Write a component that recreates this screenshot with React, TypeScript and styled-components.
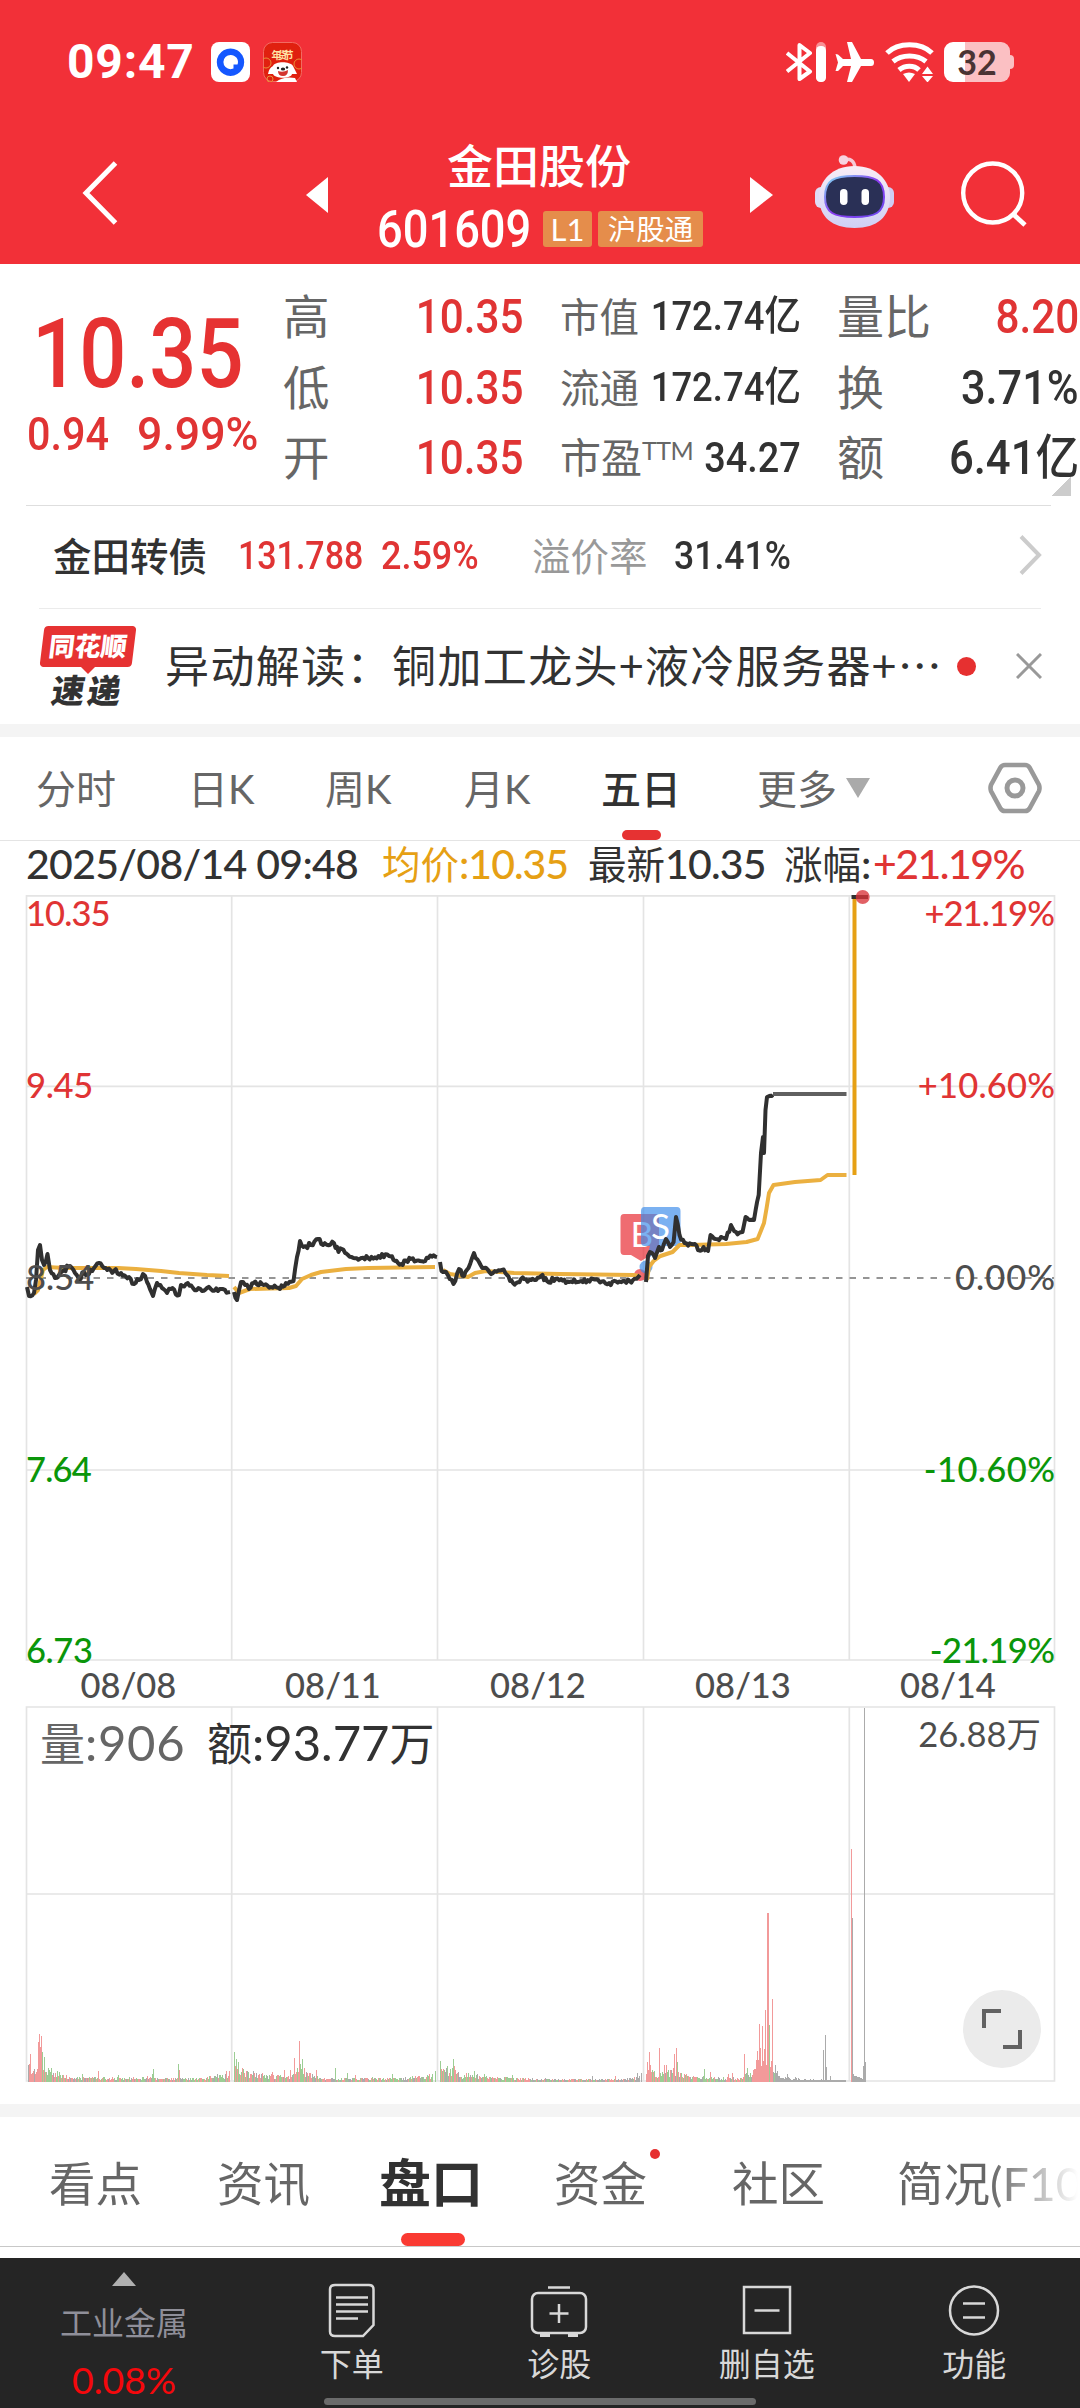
import React from "react";
import styled, { createGlobalStyle, css } from "styled-components";

const CJK = `Lato, "Noto Sans CJK SC", sans-serif`;
const DIN = `Roboto, "Noto Sans CJK SC", sans-serif`;
const RED = "#e03434";
const INK = "#323232";
const GREY = "#666666";

const Global = createGlobalStyle`
  * { box-sizing: border-box; }
  body { margin: 0; background: #fff; }
`;

const Screen = styled.main`
  width: 1080px;
  height: 2408px;
  display: flex;
  flex-direction: column;
  overflow: hidden;
  background: #fff;
  color: ${INK};
  font-family: ${CJK};
  white-space: nowrap;
`;

/* condensed numerals */
const Num = styled.span<{ $size: number; $color?: string; $k?: number; $origin?: string; $weight?: number }>`
  display: block;
  font-family: ${DIN};
  font-size: ${(p) => p.$size}px;
  font-weight: ${(p) => p.$weight ?? 500};
  color: ${(p) => p.$color ?? INK};
  transform: scaleX(${(p) => p.$k ?? 0.88});
  transform-origin: ${(p) => p.$origin ?? "left"} center;
`;

/* ---------- header ---------- */
const Header = styled.header`
  flex: none;
  height: 264px;
  background: #f23038;
  color: #fff;
`;
const StatusBar = styled.div`
  height: 124px;
  padding: 0 66px 0 67px;
  display: flex;
  align-items: center;
  justify-content: space-between;
`;
const StatusGroup = styled.div`
  display: flex;
  align-items: center;
`;
const Clock = styled.span`
  width: 144px;
  font: 700 48px/60px ${DIN};
  letter-spacing: 0.8px;
`;
const AppIcon = styled.svg`
  width: 39px;
  height: 40px;
  margin-right: 13px;
`;
const Battery = styled.div`
  width: 66px;
  height: 40px;
  margin-right: 4px;
  border-radius: 9px;
  background: linear-gradient(90deg, #fff 21px, #fbc0c3 21px);
  color: #4a3333;
  font: 700 34px/40px Lato, sans-serif;
  text-align: center;
`;
const StatusIcons = styled.svg`
  width: 158px;
  height: 40px;
`;
const BatteryTip = styled.i`
  width: 4px;
  height: 14px;
  margin-left: -4px;
  border-radius: 0 4px 4px 0;
  background: #fbc0c3;
`;
const TitleBar = styled.div`
  height: 140px;
  display: flex;
  align-items: flex-start;
`;
const BarIcon = styled.svg<{ $w: number; $h: number; $ml: number; $mt: number }>`
  flex: none;
  width: ${(p) => p.$w}px;
  height: ${(p) => p.$h}px;
  margin: ${(p) => p.$mt}px 0 0 ${(p) => p.$ml}px;
`;
const TitleBlock = styled.div`
  width: 422px;
  padding-top: 12px;
  display: flex;
  flex-direction: column;
  align-items: center;
`;
const StockName = styled.h1`
  margin: 0;
  font: 500 46px/60px ${CJK};
`;
const CodeRow = styled.div`
  width: 100%;
  height: 60px;
  margin-top: 3px;
  padding: 0 47px 0 49px;
  display: flex;
  align-items: center;
`;
const CodeCell = styled.div`
  width: 166px;
`;
const Tag = styled.span<{ $w: number }>`
  width: ${(p) => p.$w}px;
  height: 36px;
  margin-right: 6px;
  border-radius: 3px;
  background: #e58d4b;
  font: 400 28.5px/36px ${CJK};
  text-align: center;
  flex: none;
`;
const LevelTag = styled(Tag)`
  font-size: 31px;
`;

/* ---------- quote ---------- */
const Quote = styled.section`
  flex: none;
  height: 241px;
  padding-top: 17px;
  display: flex;
`;
const PriceCol = styled.div`
  width: 283px;
  flex: none;
`;
const BigPrice = styled.div`
  height: 138px;
  padding: 12px 0 0 32px;
  line-height: 122px;
`;
const ChangeRow = styled.div`
  display: flex;
  padding-left: 27px;
  line-height: 30px;
`;
const ChangeCell = styled.div`
  width: 110px;
`;
const StatCol = styled.div<{ $w: number; $gap?: number }>`
  width: ${(p) => p.$w}px;
  margin-right: ${(p) => p.$gap ?? 0}px;
  flex: none;
`;
const StatRow = styled.div`
  height: 70.5px;
  line-height: 71.5px;
  display: flex;
  justify-content: space-between;
`;
const StatLabel = styled.span<{ $size: number }>`
  display: block;
  width: 0;
  font-size: ${(p) => p.$size}px;
  color: ${GREY};
`;
const Ttm = styled.sup`
  font-size: 25px;
  line-height: 0;
  vertical-align: 13px;
  letter-spacing: -0.5px;
`;
const Divider = styled.div<{ $l: number; $r: number; $c: string }>`
  flex: none;
  height: 1px;
  margin: 0 ${(p) => p.$r}px 0 ${(p) => p.$l}px;
  background: ${(p) => p.$c};
`;
const CornerMark = styled.i`
  position: absolute;
  left: 1051px;
  top: 476px;
  width: 20px;
  height: 20px;
  background: linear-gradient(135deg, transparent 50%, #ccc 50%);
`;

/* ---------- bond + news ---------- */
const BondRow = styled.section`
  flex: none;
  height: 102px;
  padding: 0 38px 2px 53px;
  display: flex;
  align-items: center;
  font-size: 38.5px;
  line-height: 60px;
`;
const Cell = styled.div<{ $w: number; $color?: string; $weight?: number }>`
  flex: none;
  width: ${(p) => p.$w}px;
  color: ${(p) => p.$color ?? INK};
  font-weight: ${(p) => p.$weight ?? 400};
`;
const Spacer = styled.div`
  flex: 1;
`;
const NewsRow = styled.section`
  flex: none;
  height: 115px;
  padding: 17px 38px 0 40px;
  display: flex;
`;
const Badge = styled.div`
  width: 125px;
  flex: none;
`;
const BadgeTop = styled.div`
  width: 92px;
  height: 41px;
  margin-left: 2px;
  border-radius: 4px;
  background: #e63232;
  color: #fff;
  transform: skewX(-7deg);
  font: 900 26px/40px ${CJK};
  text-align: center;
`;
const BadgeTail = styled.i`
  display: block;
  width: 0;
  margin-left: 41px;
  border: 7px solid transparent;
  border-top-color: #e63232;
  border-bottom: 0;
`;
const BadgeBottom = styled.div`
  width: 86px;
  margin: -1px 0 0 5px;
  color: ${INK};
  transform: skewX(-9deg);
  font: 900 33px/34px ${CJK};
  letter-spacing: 3px;
  text-align: center;
`;
const Headline = styled.div`
  width: 792px;
  font-size: 44px;
  line-height: 80px;
  letter-spacing: 1.4px;
  font-family: "Noto Sans CJK SC", sans-serif;
  margin-top: -2px;
`;
const Dot = styled.i<{ $d: number }>`
  display: block;
  width: ${(p) => p.$d}px;
  height: ${(p) => p.$d}px;
  border-radius: 50%;
  background: #e63030;
`;
const NewsDot = styled(Dot)`
  margin-top: 31px;
`;
const Band = styled.div`
  flex: none;
  height: 13px;
  background: #f4f4f4;
`;

/* ---------- period tabs ---------- */
const PeriodTabs = styled.nav`
  flex: none;
  height: 103px;
  padding: 0 38px 0 36px;
  display: flex;
  font-size: 40px;
  line-height: 105px;
`;
const PeriodTab = styled.div<{ $w: number; $on?: boolean }>`
  position: relative;
  flex: none;
  width: ${(p) => p.$w}px;
  color: ${(p) => (p.$on ? INK : GREY)};
  ${(p) =>
    p.$on &&
    css`
      font-weight: 500;
      &::after {
        content: "";
        position: absolute;
        left: 21px;
        bottom: 0;
        width: 39px;
        height: 10px;
        border-radius: 5px;
        background: #e63232;
      }
    `}
`;
const MoreArrow = styled.i`
  margin: 41px 0 0 9px;
  width: 0;
  height: 0;
  border: 12.5px solid transparent;
  border-top: 20px solid #aaa;
  border-bottom: 0;
`;
const InfoRow = styled.div`
  flex: none;
  height: 54px;
  padding: 0 0 0 26px;
  display: flex;
  font-size: 38.5px;
  line-height: 46px;
`;
const Latin = styled.span<{ $ls?: number }>`
  font-size: 41px;
  font-weight: 500;
  letter-spacing: ${(p) => p.$ls ?? -0.7}px;
`;

/* ---------- chart ---------- */
const Chart = styled.svg`
  flex: none;
  display: block;
  width: 1080px;
  height: 1209px;
  overflow: visible;
  font-family: ${CJK};
`;

/* ---------- content tabs ---------- */
const ContentTabs = styled.nav`
  flex: none;
  height: 129px;
  padding-left: 49px;
  display: flex;
  overflow: hidden;
  mask-image: linear-gradient(90deg, #000 990px, transparent 1078px);
`;
const ContentTab = styled.div<{ $w: number; $on?: boolean }>`
  position: relative;
  flex: none;
  width: ${(p) => p.$w}px;
  font-size: ${(p) => (p.$on ? 52 : 46.5)}px;
  font-weight: ${(p) => (p.$on ? 700 : 400)};
  color: ${(p) => (p.$on ? INK : GREY)};
  line-height: 132px;
  ${(p) =>
    p.$on &&
    css`
      &::after {
        content: "";
        position: absolute;
        left: 22px;
        bottom: 0;
        width: 64px;
        height: 13px;
        border-radius: 6.5px;
        background: #fa3a32;
      }
    `}
`;
const TabDot = styled(Dot)`
  position: absolute;
  left: 96px;
  top: 32px;
`;

/* ---------- bottom bar ---------- */
const BottomBar = styled.footer`
  position: relative;
  flex: none;
  height: 150px;
  margin-top: 11px;
  background: #252525;
  display: flex;
  color: #d8d8d8;
`;
const Sector = styled.div`
  width: 248px;
  padding-top: 14px;
  display: flex;
  flex-direction: column;
  align-items: center;
  color: #8f8f99;
  font-size: 32px;
  line-height: 46px;
`;
const UpArrow = styled.i`
  width: 0;
  height: 0;
  border: 12.5px solid transparent;
  border-top: 0;
  border-bottom: 14px solid #b0b0b0;
`;
const SectorName = styled.span`
  margin-top: 14px;
`;
const SectorPct = styled.span`
  margin-top: 11px;
  color: #f5080c;
  font-size: 37.5px;
`;
const Action = styled.div`
  width: 207.5px;
  padding-top: 24px;
  display: flex;
  flex-direction: column;
  align-items: center;
  font-size: 32px;
  line-height: 47px;
`;
const ActionIcon = styled.svg`
  width: 58px;
  height: 58px;
  fill: none;
  stroke: #d8d8d8;
  stroke-width: 2.5;
`;
const HomeBar = styled.i`
  position: absolute;
  left: 324px;
  bottom: 3px;
  width: 432px;
  height: 7px;
  border-radius: 4px;
  background: #6b6b6b;
`;

/* ---------- chart data ---------- */
type Pt = [number, number];

const priceDays: Pt[][] = [
  [[27,1287],[29,1296],[34,1293],[36,1280],[38,1250],[40,1245],[42,1260],[44,1265],[47.5,1254],[50,1270],[55,1278],[59,1275],[64,1270],[70,1266],[75,1273],[79,1279],[84,1272],[89,1274],[94,1268],[99,1263],[104,1268],[114,1271],[121,1273],[129,1277],[134,1284],[139,1280],[143,1274],[147,1282],[153,1296],[157,1283],[162,1288],[167,1293],[171,1289],[179,1295],[181,1285],[186,1284],[193,1288],[202,1291],[207,1288],[218,1291],[230,1292]],
  [[234,1292],[237,1300],[241,1282],[245,1285],[249,1289],[253.5,1283],[264,1285],[271,1287],[280,1289],[286,1283],[293.5,1281],[297,1257],[300,1241],[303.5,1247],[311,1245],[318,1239],[323,1245],[334,1243],[338.5,1252],[342,1249],[348,1255],[353.5,1258],[368,1258],[378.5,1256],[389,1256],[395,1261],[401,1264],[411,1259],[420,1261],[428.5,1258],[437,1257]],
  [[440,1262],[441.5,1271],[446,1272],[453.5,1284],[459,1269],[464,1276],[468.5,1268],[474,1253],[479,1262],[484,1268],[493,1273],[502,1270],[507,1275],[513,1283],[521,1279],[536,1280],[541,1276],[547,1281],[561,1279],[569,1282],[581,1281],[593,1279],[609,1283],[623,1281],[633,1280],[640,1275]],
  [[646,1282],[648,1256],[652,1253],[655,1258],[659,1247],[662,1250],[666,1239],[670,1247],[673.6,1242],[676,1217],[679.5,1235],[684.6,1243],[695,1244],[698,1250],[703.6,1247],[708,1251],[710.5,1235],[715.6,1239],[721,1237],[726,1239],[731,1225],[736,1232],[742.5,1232],[745.6,1217],[750,1220],[754,1220],[758.7,1195],[761,1153],[763,1137],[764,1153],[765.5,1110],[767,1097],[773,1095]],
];

const averageDays: Pt[][] = [
  [[34,1294],[38,1290],[43,1270],[47,1267],[64,1268],[118,1268],[136,1269],[161,1271],[179,1273],[207,1275],[229,1276]],
  [[234,1287],[239,1293],[250,1289],[289,1288],[296,1286],[302,1279],[311,1275],[321,1272],[346,1269],[368,1268],[435,1267]],
  [[443,1270],[450,1274],[468,1277],[475,1273],[486,1271],[514,1273],[560,1274],[633,1275],[640,1276]],
  [[647,1280],[649,1267],[653.6,1261],[660.5,1256],[672.6,1252],[679.5,1245],[691,1245],[726,1244],[746.6,1242],[757.6,1239],[764,1223],[766.6,1208],[769,1193],[773.5,1185],[795,1182],[820.6,1180],[827.5,1175],[846.5,1175]],
  [[854.5,1175],[854.5,897]],
];

const noise = (i: number) => {
  const v = Math.sin(i * 127.1 + 11.7) * 43758.5453;
  return v - Math.floor(v);
};

/* minute-by-minute ripple added between turning points */
const ripple = (pts: Pt[]): string => {
  const out: string[] = [];
  for (let i = 0; i < pts.length - 1; i++) {
    const [x0, y0] = pts[i];
    const [x1, y1] = pts[i + 1];
    const n = Math.max(1, Math.round((x1 - x0) / 1.7));
    for (let k = 0; k < n; k++) {
      const t = k / n;
      const amp = k === 0 ? 0 : 5;
      out.push(`${(x0 + (x1 - x0) * t).toFixed(1)},${(y0 + (y1 - y0) * t + (noise(x0 * 3 + k) - 0.5) * amp).toFixed(1)}`);
    }
  }
  out.push(pts[pts.length - 1].join(","));
  return out.join(" ");
};

const TINT = { r: "#f29a9a", g: "#9ccd94", n: "#ababab" };
type Tint = keyof typeof TINT;

/* baseline volume per session: [x, typical height] */
const volumeFloor: Pt[][] = [
  [[28,14],[32,9],[37,14],[44,20],[48,9],[60,8],[72,4],[110,3],[150,4],[158,3],[200,3],[215,5],[229,6]],
  [[234,22],[239,13],[250,8],[270,6],[292,5],[296,14],[302,15],[306,8],[320,3],[360,3],[400,3],[432,6]],
  [[440,15],[447,11],[455,10],[460,6],[475,7],[482,4],[520,3],[560,2],[620,2],[640,4]],
  [[646,16],[650,16],[654,8],[668,9],[674,12],[680,9],[688,5],[720,3],[742,4],[746,7],[752,6],[756,18],[760,30],[766,30],[771,26],[775,14],[778,5],[800,2],[846,1]],
  [[853,8],[858,4],[866,4]],
];
const volumeSpikes: [number, number, Tint][] = [
  [30,28,"r"],[38,40,"r"],[39,48,"r"],[40,35,"r"],[41,46,"r"],[42,30,"g"],[44,25,"g"],[48,14,"g"],[51,14,"g"],[98,11,"r"],[82,8,"g"],[118,7,"g"],[152,8,"g"],[153,13,"g"],[178,18,"g"],[179,12,"r"],[217,8,"n"],[226,11,"r"],[229,11,"r"],
  [234,30,"g"],[236,18,"g"],[262,9,"r"],[272,10,"r"],[284,12,"r"],[290,12,"r"],[294,24,"r"],[299,41,"r"],[302,23,"g"],[316,12,"r"],[335,14,"g"],[347,9,"g"],[355,7,"r"],[392,8,"g"],[419,6,"r"],[432,8,"g"],[435,11,"g"],
  [440,21,"g"],[447,16,"g"],[453,23,"g"],[454,16,"r"],[466,9,"r"],[474,11,"g"],[484,8,"g"],[512,7,"g"],[592,6,"n"],[615,6,"r"],[637,9,"n"],[641,9,"n"],
  [649,30,"r"],[659,34,"r"],[664,17,"r"],[666,17,"r"],[674,28,"r"],[676,34,"r"],[677,20,"g"],[704,13,"g"],[710,10,"r"],[728,8,"r"],[732,9,"r"],[744,28,"r"],[747,14,"g"],[757,31,"r"],[759,58,"r"],[762,56,"r"],[765,72,"r"],[767,169,"r"],[768,169,"r"],[769,57,"g"],[772,83,"r"],[787,8,"n"],[795,5,"n"],[823,32,"n"],[825,47,"n"],[826,15,"n"],[830,6,"n"],
  [851,233,"r"],[852,164,"n"],[863,16,"n"],[864,374,"n"],[865,20,"n"],
];

const tintAt = (day: number, x: number): Tint => {
  const v = noise(x * 1.7);
  if (day === 4 || (day === 3 && x > 774)) return "n";
  if (day === 2 && x > 530) return v < 0.3 ? "r" : v < 0.5 ? "g" : "n";
  if (day === 3 && (x < 652 || (x > 752 && x < 768))) return "r";
  if (day === 0 && x > 36 && x < 42) return "r";
  return v < 0.4 ? "r" : v < 0.76 ? "g" : "n";
};

const VolumeBars = () => {
  const bars: React.ReactElement[] = [];
  volumeFloor.forEach((pts, day) => {
    for (let i = 0; i < pts.length - 1; i++) {
      const [x0, h0] = pts[i];
      const [x1, h1] = pts[i + 1];
      for (let x = x0; x < x1; x++) {
        const base = h0 + ((h1 - h0) * (x - x0)) / (x1 - x0);
        const h = Math.max(1.5, base * (0.45 + noise(x) * 0.9));
        bars.push(<rect key={`f${x}`} x={x} y={2081.5 - h} width={1} height={h} fill={TINT[tintAt(day, x)]} />);
      }
    }
  });
  volumeSpikes.forEach(([x, h, t]) => bars.push(<rect key={`s${x}`} x={x} y={2081.5 - h} width={1} height={h} fill={TINT[t]} />));
  return <g shapeRendering="crispEdges">{bars}</g>;
};

const leftLabels: [string, number, string, number][] = [
  ["10.35", 926, RED, -0.9], ["9.45", 1098, RED, -0.3], ["8.54", 1290, "#4d4d4d", 0], ["7.64", 1482, "#0a960a", -0.8], ["6.73", 1663, "#0a960a", -0.4],
];
const rightLabels: [string, number, string, number][] = [
  ["+21.19%", 926, RED, -0.9], ["+10.60%", 1098, RED, 0.2], ["0.00%", 1290, "#4d4d4d", 1], ["-10.60%", 1482, "#0a960a", 0.4], ["-21.19%", 1663, "#0a960a", -0.6],
];
const dates: [string, number][] = [["08/08", 128.5], ["08/11", 333], ["08/12", 538], ["08/13", 743], ["08/14", 948]];

const ChartPanel = () => (
  <Chart viewBox="0 895 1080 1209">
    <g stroke="#e4e4e4" strokeWidth="1.7" fill="none">
      <path d="M26.5 895.8H1054.5V1660H26.5ZM26.5 1086.3H1054.5M26.5 1470H1054.5" />
      <path d="M26.5 1707H1054.5V2081H26.5ZM26.5 1894H1054.5" />
      <path d="M231.7 895V1660M437.5 895V1660M643.5 895V1660M849.3 895V1660" />
      <path d="M231.7 1707V2081M437.5 1707V2081M643.5 1707V2081M849.3 1707V2081" />
    </g>
    <path d="M26 1278H1054" stroke="#959595" strokeWidth="2" strokeDasharray="6.500 7" />
    <g fill="#e82e34" fillOpacity="0.7">
      <path d="M624 1214H655.500Q659 1214 659 1218V1251Q659 1255 655.500 1255H651L641 1261L631 1255H624Q620.500 1255 620.500 1251V1218Q620.500 1214 624 1214Z" />
      <circle cx="640" cy="1275" r="6" />
    </g>
    <text x="630.5" y="1247" fontSize="35" fill="#fff">B</text>
    <g fill="#3c8ceb" fillOpacity="0.68">
      <path d="M644.500 1207H677Q680.500 1207 680.500 1211V1242Q680.500 1246 677 1246H662L646 1261L650 1246H644.500Q641 1246 641 1242V1211Q641 1207 644.500 1207Z" />
      <circle cx="646" cy="1267" r="6.5" />
    </g>
    <text x="651" y="1239" fontSize="35" fill="#fff">S</text>
    {averageDays.map((d, i) => (
      <polyline key={i} points={d.map((p) => p.join(",")).join(" ")} fill="none" stroke={i === 4 ? "#e6a014" : "#ebb040"} strokeWidth={4} strokeLinejoin="round" />
    ))}
    {priceDays.map((d, i) => (
      <polyline key={i} points={ripple(d)} fill="none" stroke="#303030" strokeWidth="4" strokeLinejoin="round" />
    ))}
    <path d="M773 1094H846.500" stroke="#606060" strokeWidth="4" />
    <path d="M851.500 897H868" stroke="#303030" strokeWidth="4" />
    <circle cx="862.7" cy="897" r="7" fill="#d9333a" fillOpacity="0.78" />
    <g fontSize="34.5" fontWeight="500">
      {leftLabels.map(([t, y, c, ls]) => (
        <text key={t} x="26" y={y} fill={c} letterSpacing={ls}>{t}</text>
      ))}
      {rightLabels.map(([t, y, c, ls]) => (
        <text key={t} x={1055 + ls} y={y} fill={c} letterSpacing={ls} textAnchor="end">{t}</text>
      ))}
      {dates.map(([t, x]) => (
        <text key={t} x={x} y="1698" fill="#4d4d4d" textAnchor="middle">{t}</text>
      ))}
      <text x="1041" y="1747" fill="#4d4d4d" fontWeight="400" textAnchor="end">26.88万</text>
    </g>
    <VolumeBars />
    <text y="1761" fontSize="49">
      <tspan x="40" fontSize="45" fill={GREY}>量</tspan>
      <tspan fill={GREY} letterSpacing="0.7">:906</tspan>
      <tspan x="207" fontSize="45" fill={INK}>额</tspan>
      <tspan fill={INK}>:93.77</tspan>
      <tspan fontSize="45" fill={INK}>万</tspan>
    </text>
    <circle cx="1002" cy="2029" r="39" fill="#ebebeb" />
    <path d="M984 2028V2011H1001M1020 2030V2047H1003" fill="none" stroke="#626262" strokeWidth="4" />
  </Chart>
);

/* ---------- glyphs ---------- */
const StatusGlyphs = () => (
  <StatusIcons viewBox="786 42 158 40">
    <g fill="none" stroke="#fff" strokeWidth="4">
      <path d="M787 53L810 71.500L799.500 79V45L810 53L787 71.500" strokeLinejoin="round" />
      <path d="M887 53C898 42 921 42 932 53" strokeWidth="5" />
      <path d="M893 61.500C902 54 917 54 926 61.500" strokeWidth="5" />
      <path d="M899 70C905 65 914 65 919 70" strokeWidth="5" />
    </g>
    <rect x="816" y="42" width="10" height="40" rx="5" fill="#f98f94" />
    <rect x="816" y="46" width="10" height="36" rx="4.500" fill="#fff" />
    <g fill="#fff">
      <path d="M847 42H852L861 59H871Q874 59 874 62.500Q874 66 871 66H861L852 82H847L851 66H843L838 71H835.500L838 62.500L835.500 54L838 54.500L843 59H851Z" />
      <path d="M903 74Q909 71 915 74L909 82Z" />
      <path d="M922 74L927.500 66.500L933 74ZM922 76H933L927.500 82.500Z" />
    </g>
  </StatusIcons>
);

const RobotIcon = () => (
  <BarIcon viewBox="814 155 80 74" $w={80} $h={74} $ml={41} $mt={31}>
    <defs>
      <linearGradient id="shell" x1="0" y1="0" x2="0" y2="1">
        <stop offset="0" stopColor="#f9edf6" />
        <stop offset="1" stopColor="#cfd0f5" />
      </linearGradient>
      <linearGradient id="rim" x1="0" y1="0" x2="1" y2="1">
        <stop offset="0" stopColor="#7fe0f2" />
        <stop offset=".5" stopColor="#8a3bf0" />
        <stop offset="1" stopColor="#6a4bf0" />
      </linearGradient>
    </defs>
    <path d="M843 160Q854 157 855 168" fill="none" stroke="#f6c9d6" strokeWidth="3.500" />
    <circle cx="843.500" cy="160" r="4.800" fill="#f7d3e0" />
    <rect x="815" y="187" width="14" height="21" rx="6" fill="#dfdcf6" />
    <rect x="880" y="187" width="14" height="21" rx="6" fill="#cfcdf2" />
    <path d="M854.500 166C877 166 890 181 890 197C890 217 877 228 854.500 228C832 228 819 217 819 197C819 181 832 166 854.500 166Z" fill="url(#shell)" />
    <path d="M854.500 176C875 176 884 180 884 197C884 213 875 217 854.500 217C834 217 825 213 825 197C825 180 834 176 854.500 176Z" fill="#2a3056" stroke="url(#rim)" strokeWidth="2" />
    <rect x="840" y="189" width="7.500" height="16" rx="3.700" fill="#fff" />
    <rect x="861.500" y="189" width="7.500" height="16" rx="3.700" fill="#fff" />
  </BarIcon>
);

const FestivalIcon = () => (
  <AppIcon viewBox="0 0 39 40">
    <rect x=".5" y=".5" width="38" height="39" rx="9" fill="#e0200f" stroke="#f26a62" />
    <circle cx="3" cy="21" r="5" fill="none" stroke="#e8913a" />
    <circle cx="36" cy="22" r="5" fill="none" stroke="#e8913a" />
    <circle cx="7" cy="37" r="3" fill="none" stroke="#e8913a" />
    <text x="19.500" y="17" fontSize="10" fontWeight="700" fill="#ffe4a6" textAnchor="middle" textLength="22">年货节</text>
    <path d="M10 24C12 19 27 19 30 24L34 32H29C28 37 12 37 10 32H5Q6 26 10 24Z" fill="#fff" />
    <path d="M13 40Q20 34 32 36L34 40Z" fill="#fff" />
    <path d="M15 29Q20 31 25 28Q25 34 20 34Q15 34 15 29Z" fill="#d3352f" />
    <circle cx="15" cy="26" r="1.200" fill="#222" />
    <circle cx="24" cy="25.500" r="1.200" fill="#222" />
    <ellipse cx="20" cy="27" rx="2.200" ry="1.500" fill="#222" />
  </AppIcon>
);

export default function App() {
  return (
    <Screen lang="zh-CN">
      <Global />
      <Header>
        <StatusBar>
          <StatusGroup>
            <Clock>09:47</Clock>
            <AppIcon viewBox="0 0 39 40">
              <rect width="39" height="40" rx="8" fill="#fff" />
              <path fillRule="evenodd" d="M19.500 6.500A13.700 13.700 0 1 1 19.490 6.500ZM19.500 13A7 7 0 1 0 19.500 27.200L22.500 26.500V22.500H26.500A7 7 0 0 0 19.500 13Z" fill="#1457ff" />
            </AppIcon>
            <FestivalIcon />
          </StatusGroup>
          <StatusGroup>
            <StatusGlyphs />
            <Battery>32</Battery>
            <BatteryTip />
          </StatusGroup>
        </StatusBar>
        <TitleBar>
          <BarIcon viewBox="0 0 36 64" $w={36} $h={64} $ml={82} $mt={37}>
            <path d="M33.500 2L4 32L33.500 62" fill="none" stroke="#fff" strokeWidth="5" />
          </BarIcon>
          <BarIcon viewBox="0 0 22 36" $w={22} $h={36} $ml={188} $mt={53}>
            <path d="M22 0V36L0 18Z" fill="#fff" />
          </BarIcon>
          <TitleBlock>
            <StockName>金田股份</StockName>
            <CodeRow>
              <CodeCell>
                <Num $size={52} $k={0.87} $color="#fff">601609</Num>
              </CodeCell>
              <LevelTag $w={49}>L1</LevelTag>
              <Tag $w={105}>沪股通</Tag>
            </CodeRow>
          </TitleBlock>
          <BarIcon viewBox="0 0 23 36" $w={23} $h={36} $ml={0} $mt={53}>
            <path d="M0 0V36L23 18Z" fill="#fff" />
          </BarIcon>
          <RobotIcon />
          <BarIcon viewBox="960 160 68 68" $w={68} $h={68} $ml={66} $mt={36}>
            <circle cx="992.700" cy="193" r="29.500" fill="none" stroke="#fff" strokeWidth="4.400" />
            <path d="M1013 214L1025 225" stroke="#fff" strokeWidth="4.800" />
          </BarIcon>
        </TitleBar>
      </Header>

      <Quote>
        <PriceCol>
          <BigPrice>
            <Num $size={97} $k={0.855} $color="#e63232">10.35</Num>
          </BigPrice>
          <ChangeRow>
            <ChangeCell><Num $size={47} $color={RED}>0.94</Num></ChangeCell>
            <ChangeCell><Num $size={47} $color={RED} $k={0.95}>9.99%</Num></ChangeCell>
          </ChangeRow>
        </PriceCol>
        <StatCol $w={240} $gap={37}>
          {["高", "低", "开"].map((l) => (
            <StatRow key={l}>
              <StatLabel $size={46.5}>{l}</StatLabel>
              <Num $size={48} $color={RED} $origin="right">10.35</Num>
            </StatRow>
          ))}
        </StatCol>
        <StatCol $w={241} $gap={36}>
          <StatRow><StatLabel $size={39.5}>市值</StatLabel><Num $size={40.5} $origin="right" $k={0.9}>172.74亿</Num></StatRow>
          <StatRow><StatLabel $size={39.5}>流通</StatLabel><Num $size={40.5} $origin="right" $k={0.9}>172.74亿</Num></StatRow>
          <StatRow><StatLabel $size={41}>市盈<Ttm>TTM</Ttm></StatLabel><Num $size={43} $origin="right">34.27</Num></StatRow>
        </StatCol>
        <StatCol $w={242}>
          <StatRow><StatLabel $size={47}>量比</StatLabel><Num $size={48} $color={RED} $origin="right">8.20</Num></StatRow>
          <StatRow><StatLabel $size={47}>换</StatLabel><Num $size={48} $origin="right" $k={0.9}>3.71%</Num></StatRow>
          <StatRow><StatLabel $size={47}>额</StatLabel><Num $size={48} $origin="right" $k={0.91}>6.41亿</Num></StatRow>
        </StatCol>
        <CornerMark />
      </Quote>
      <Divider $l={26} $r={29} $c="#dedede" />

      <BondRow>
        <Cell $w={185} $weight={500}>金田转债</Cell>
        <Cell $w={143}><Num $size={39.5} $color={RED} $k={0.86}>131.788</Num></Cell>
        <Cell $w={151}><Num $size={39.5} $color={RED} $k={0.91}>2.59%</Num></Cell>
        <Cell $w={142} $color="#999">溢价率</Cell>
        <Cell $w={120}><Num $size={39.5} $k={0.9}>31.41%</Num></Cell>
        <Spacer />
        <BarIcon viewBox="0 0 23 40" $w={23} $h={40} $ml={0} $mt={-2}>
          <path d="M2 1.500L20 20L2 38.500" fill="none" stroke="#ccc" strokeWidth="4" />
        </BarIcon>
      </BondRow>
      <Divider $l={39} $r={39} $c="#ebebeb" />
      <NewsRow>
        <Badge>
          <BadgeTop>同花顺</BadgeTop>
          <BadgeTail />
          <BadgeBottom>速递</BadgeBottom>
        </Badge>
        <Headline>异动解读：铜加工龙头+液冷服务器+…</Headline>
        <NewsDot $d={19} />
        <Spacer />
        <BarIcon viewBox="0 0 26 26" $w={26} $h={26} $ml={0} $mt={27}>
          <path d="M1 1L25 25M25 1L1 25" stroke="#999" strokeWidth="3" />
        </BarIcon>
      </NewsRow>
      <Band />

      <PeriodTabs>
        <PeriodTab $w={152}>分时</PeriodTab>
        <PeriodTab $w={137}>日K</PeriodTab>
        <PeriodTab $w={139}>周K</PeriodTab>
        <PeriodTab $w={137}>月K</PeriodTab>
        <PeriodTab $w={156} $on>五日</PeriodTab>
        <PeriodTab $w={80}>更多</PeriodTab>
        <MoreArrow />
        <Spacer />
        <BarIcon viewBox="0 0 54 52" $w={54} $h={52} $ml={0} $mt={25}>
          <path d="M17 3H37Q40 3 41.500 5.500L51 23Q52 26 51 29L41.500 46.500Q40 49 37 49H17Q14 49 12.500 46.500L3 29Q2 26 3 23L12.500 5.500Q14 3 17 3Z" fill="none" stroke="#999" strokeWidth="4.600" />
          <circle cx="27" cy="26" r="8" fill="none" stroke="#999" strokeWidth="5" />
        </BarIcon>
      </PeriodTabs>
      <Divider $l={0} $r={0} $c="#e4e4e4" />
      <InfoRow>
        <Cell $w={356}><Latin>2025/08/14 09:48</Latin></Cell>
        <Cell $w={206} $color="#e6a014">均价<Latin $ls={-1}>:10.35</Latin></Cell>
        <Cell $w={196}>最新<Latin $ls={-0.8}>10.35</Latin></Cell>
        <Cell $w={89}>涨幅<Latin>:</Latin></Cell>
        <Cell $w={160} $color={RED}><Latin $ls={-1.5}>+21.19%</Latin></Cell>
      </InfoRow>

      <ChartPanel />
      <Band />

      <ContentTabs>
        <ContentTab $w={168}>看点</ContentTab>
        <ContentTab $w={162}>资讯</ContentTab>
        <ContentTab $w={175} $on>盘口</ContentTab>
        <ContentTab $w={178}>资金<TabDot $d={10} /></ContentTab>
        <ContentTab $w={165}>社区</ContentTab>
        <ContentTab $w={220}>简况(F10)</ContentTab>
      </ContentTabs>
      <Divider $l={0} $r={0} $c="#c8c8c8" />

      <BottomBar>
        <Sector>
          <UpArrow />
          <SectorName>工业金属</SectorName>
          <SectorPct>0.08%</SectorPct>
        </Sector>
        <Action>
          <ActionIcon viewBox="0 0 58 58">
            <path d="M12 3H46Q50.500 3 50.500 7.500V43L40 54H12Q7 54 7 49.500V7.500Q7 3 12 3Z" />
            <path d="M13 15.500H45M13 22.500H45M13 29.500H45M13 36.500H35" />
          </ActionIcon>
          下单
        </Action>
        <Action>
          <ActionIcon viewBox="0 0 58 58">
            <path d="M18 5.500H40" />
            <rect x="2" y="11" width="54" height="40" rx="6" />
            <path d="M29 22V41M19.500 31.500H38.500" />
            <path d="M10 53H20M38 53H48" strokeWidth="4" />
          </ActionIcon>
          诊股
        </Action>
        <Action>
          <ActionIcon viewBox="0 0 58 58">
            <rect x="6" y="5" width="46" height="46" />
            <path d="M16.500 28.500H41.500" />
          </ActionIcon>
          删自选
        </Action>
        <Action>
          <ActionIcon viewBox="0 0 58 58">
            <circle cx="29" cy="28.500" r="24" />
            <path d="M18 21.500H40M18 35.500H40" />
          </ActionIcon>
          功能
        </Action>
        <HomeBar />
      </BottomBar>
    </Screen>
  );
}
